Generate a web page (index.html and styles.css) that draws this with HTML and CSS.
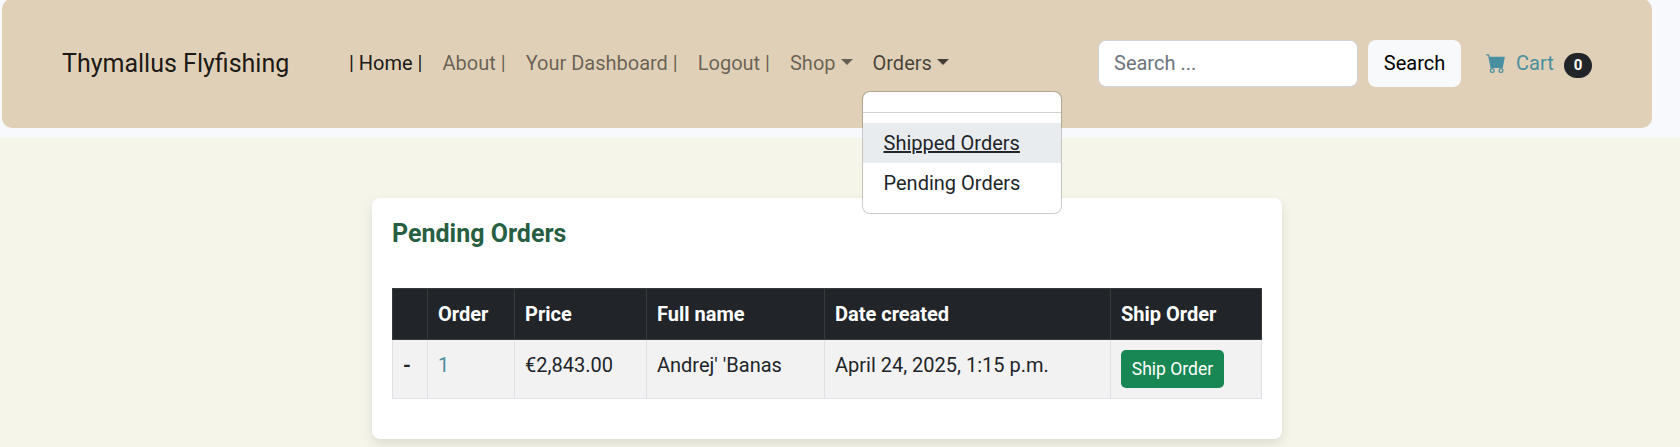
FILE: index.html
```html
<!DOCTYPE html>
<html lang="en">
<head>
<meta charset="utf-8">
<title>Thymallus Flyfishing</title>
<link rel="stylesheet" href="styles.css">
</head>
<body>
<header class="site-header">
  <nav class="navbar">
    <a class="brand" href="#">Thymallus Flyfishing</a>
    <ul class="nav">
      <li><a class="nav-link active" href="#">| Home |</a></li>
      <li><a class="nav-link" href="#">About |</a></li>
      <li><a class="nav-link" href="#">Your Dashboard |</a></li>
      <li><a class="nav-link" href="#">Logout |</a></li>
      <li><a class="nav-link toggle" href="#">Shop</a></li>
      <li class="dropdown"><a class="nav-link toggle open" href="#">Orders</a>
        <div class="menu">
          <hr class="divider">
          <a class="item hover" href="#">Shipped Orders</a>
          <a class="item" href="#">Pending Orders</a>
        </div>
      </li>
    </ul>
    <form class="search">
      <input class="field" type="text" placeholder="Search ...">
      <button class="btn" type="button">Search</button>
    </form>
    <a class="cart" href="#">
      <svg class="cart-icon" viewBox="0 0 16 16" fill="currentColor"><path d="M0 1.5A.5.5 0 0 1 .5 1H2a.5.5 0 0 1 .485.379L2.89 3H14.500a.5.5 0 0 1 .491.592l-1.500 8A.5.5 0 0 1 13 12H4a.5.5 0 0 1-.491-.408L2.010 3.607 1.610 2H.5a.5.5 0 0 1-.5-.5M5 12a2 2 0 1 0 0 4 2 2 0 0 0 0-4m7 0a2 2 0 1 0 0 4 2 2 0 0 0 0-4m-7 1a1 1 0 1 1 0 2 1 1 0 0 1 0-2m7 0a1 1 0 1 1 0 2 1 1 0 0 1 0-2"/></svg>
      <span>Cart</span>
      <span class="badge">0</span>
    </a>
  </nav>
</header>
<main class="card">
  <h1 class="title">Pending Orders</h1>
  <table class="orders">
    <colgroup><col class="c-mark"><col class="c-order"><col class="c-price"><col class="c-name"><col class="c-date"><col class="c-ship"></colgroup>
    <thead>
      <tr><th></th><th>Order</th><th>Price</th><th>Full name</th><th>Date created</th><th>Ship Order</th></tr>
    </thead>
    <tbody>
      <tr><th>-</th><td><a class="order-link" href="#">1</a></td><td>€2,843.00</td><td>Andrej' 'Banas</td><td>April 24, 2025, 1:15 p.m.</td><td><button class="ship" type="button">Ship Order</button></td></tr>
    </tbody>
  </table>
</main>
</body>
</html>
```
FILE: styles.css
```css
* { box-sizing: border-box; }
body {
  margin: 0;
  height: 447px;
  overflow: hidden;
  background: #f5f5e9;
  color: #212529;
  font: 20px/30px Roboto, sans-serif;
}
a { text-decoration: none; }
.site-header { display: flow-root; background: #f8f9fc; height: 138px; padding: 0 28px 10px 2px; }
.navbar {
  display: flex;
  align-items: center;
  height: 129px;
  margin-top: -1px;
  padding: 0 60px;
  background: #e0d0b7;
  border-radius: 10px;
}
.brand { width: 277px; margin-top: 1px; color: rgba(0,0,0,.9); font-size: 25px; white-space: nowrap; }
.nav { display: flex; list-style: none; margin: 0 0 1px; padding: 0; }
.nav-link { display: block; padding: 10px; color: rgba(0,0,0,.55); white-space: nowrap; }
.active { color: rgba(0,0,0,.9); }
.open { color: rgba(0,0,0,.7); }
.toggle::after {
  content: "";
  display: inline-block;
  margin-left: 5px;
  vertical-align: 5px;
  border-top: 6px solid;
  border-left: 6px solid transparent;
  border-right: 6px solid transparent;
}
.dropdown { position: relative; }
.menu {
  position: absolute;
  top: 53px;
  left: -1px;
  z-index: 5;
  width: 200px;
  padding: 10px 0;
  background: #fff;
  background-clip: padding-box;
  border: 1px solid rgba(0,0,0,.2);
  border-radius: 8px;
}
.divider { height: 1px; margin: 10px 0; border: 0; background: #d2d2d3; }
.item { display: block; padding: 5px 20px 5px 21px; color: #212529; white-space: nowrap; }
.hover { background: #e9ecef; text-decoration: underline; }
.search { display: flex; align-items: center; gap: 10px; margin: 0 0 0 auto; }
.field {
  width: 260px;
  height: 47px;
  padding: 7px 15px 8px;
  border: 1px solid #ced4da;
  border-radius: 8px;
  background: #fff;
  font: inherit;
}
.field::placeholder { color: #6c757d; opacity: 1; }
.btn { width: 93px; height: 47px; padding: 0 0 1px; border: 0; border-radius: 8px; background: #f8f9fa; color: #000; font: inherit; }
.cart { display: flex; align-items: center; width: 106px; margin: 0 0 1px 25px; color: #4a8f9f; }
.cart-icon { width: 20px; height: 20px; margin: 0 10px 1px 0; }
.badge {
  width: 28px;
  height: 25px;
  margin: 4px 0 0 auto;
  border-radius: 12.5px;
  background: #212529;
  color: #fff;
  font-size: 15px;
  font-weight: 700;
  line-height: 24px;
  text-align: center;
}
.card {
  width: 910px;
  height: 241px;
  margin: 60px 0 0 372px;
  padding: 21px 20px 20px;
  background: #fff;
  border-radius: 8px;
  box-shadow: 0 5px 12px rgba(0,0,0,.1);
}
.title { margin: 0 0 39px; color: #285f43; font-size: 25px; font-weight: 700; line-height: 30px; }
.orders { width: 870px; table-layout: fixed; border-collapse: collapse; }
.c-mark { width: 35px; }
.c-order { width: 87px; }
.c-price { width: 132px; }
.c-name { width: 178px; }
.c-date { width: 286px; }
.c-ship { width: 151px; }
.orders th, .orders td { padding: 10px; border: 1px solid #dee2e6; text-align: left; vertical-align: top; white-space: nowrap; }
.orders thead th { height: 51px; background: #212529; border-color: #373b3e; color: #fff; }
.orders tbody th, .orders tbody td { height: 59px; background: #f2f2f2; }
.order-link { color: #4a8f9f; }
.ship {
  display: block;
  width: 103px;
  height: 38px;
  padding: 0 0 1px;
  border: 0;
  border-radius: 5px;
  background: #198754;
  color: #fff;
  font: 17.5px/26px Roboto, sans-serif;
}
```
